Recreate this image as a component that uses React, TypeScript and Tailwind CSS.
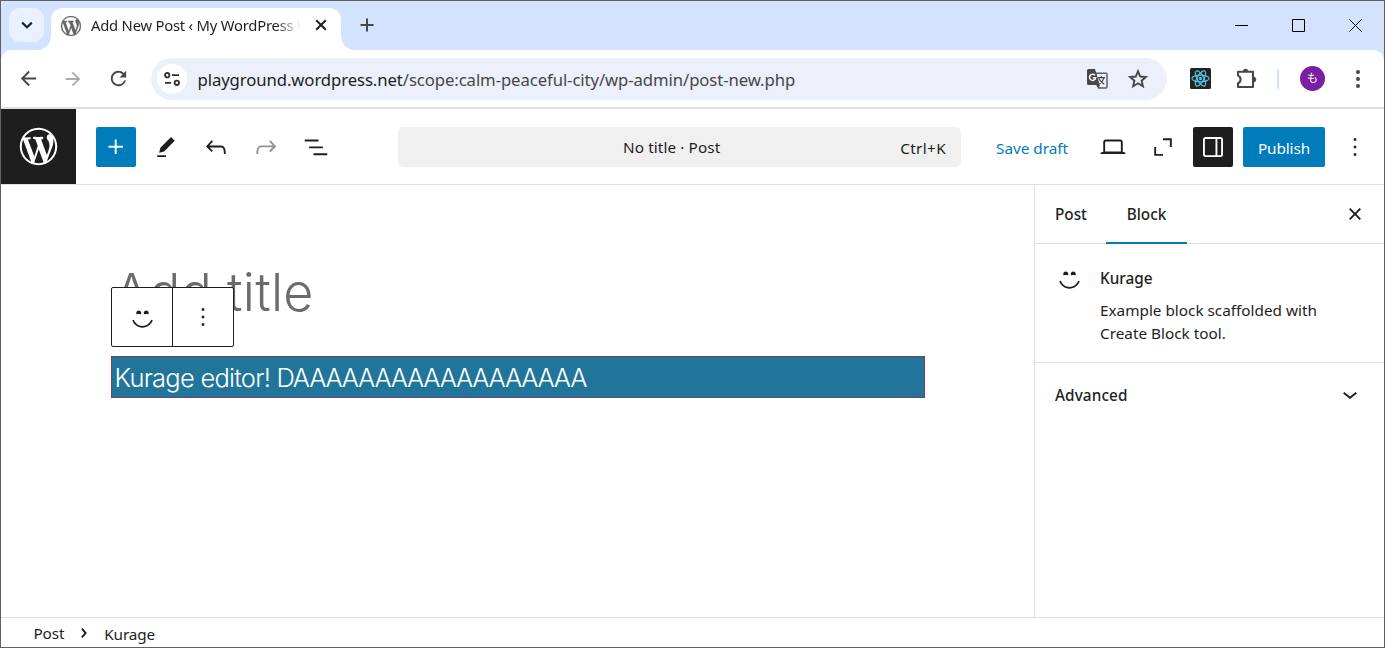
import React from 'react';
import clsx from 'clsx';
import { MdArrowBack, MdArrowForward, MdRefresh } from 'react-icons/md';

const WP_LOGO =
  'M20 10c0-5.51-4.49-10-10-10C4.48 0 0 4.49 0 10c0 5.52 4.48 10 10 10 5.51 0 10-4.48 10-10zM7.78 15.37L4.37 6.22c.55-.02 1.17-.08 1.17-.08.5-.06.44-1.13-.06-1.11 0 0-1.45.11-2.37.11-.18 0-.37 0-.58-.01C4.12 2.69 6.87 1.11 10 1.11c2.33 0 4.45.87 6.05 2.34-.68-.11-1.65.39-1.65 1.58 0 .74.45 1.36.9 2.1.35.61.55 1.36.55 2.46 0 1.49-1.4 5-1.4 5l-3.03-8.37c.54-.02.82-.17.82-.17.5-.05.44-1.25-.06-1.22 0 0-1.44.12-2.38.12-.87 0-2.33-.12-2.33-.12-.5-.03-.56 1.2-.06 1.22l.92.08 1.26 3.41zM17.41 10c.24-.64.74-1.87.43-4.25.7 1.29 1.05 2.71 1.05 4.25 0 3.29-1.73 6.24-4.4 7.78.97-2.59 1.94-5.2 2.92-7.78zM6.1 18.09C3.12 16.65 1.11 13.53 1.11 10c0-1.3.23-2.48.72-3.59C3.25 10.3 4.67 14.2 6.1 18.09zm4.03-6.63l2.58 6.98c-.86.29-1.76.45-2.71.45-.79 0-1.57-.11-2.29-.33.81-2.38 1.62-4.74 2.42-7.1z';

const icons = {
  plus: 'M11 12.5V17.5H12.5V12.5H17.5V11H12.5V6H11V11H6V12.5H11Z',
  edit: 'm19 7-3-3-8.5 8.5-1 4 4-1L19 7Zm-7 11.5H5V20h7v-1.5Z',
  undo: 'M18.3 11.7c-.6-.6-1.4-.9-2.3-.9H6.7l2.9-3.3-1.1-1-4.5 5L8.5 16l1-1-2.7-2.7H16c.5 0 .9.2 1.3.5 1 1 1 3.4 1 4.5v.3h1.5v-.2c0-1.5 0-4.3-1.5-5.7z',
  redo: 'M15.6 6.5l-1.1 1 2.9 3.3H8c-.9 0-1.7.3-2.3.9-1.4 1.5-1.4 4.2-1.4 5.6v.2h1.5v-.3c0-1.1 0-3.5 1-4.5.3-.3.7-.5 1.3-.5h9.2L14.5 15l1.1 1.1 4.6-4.6-4.6-5z',
  listView: 'M3 6h11v1.5H3V6Zm3.5 5.5h11V13h-11v-1.5ZM21 17H10v1.5h11V17Z',
  desktop:
    'M20.5 16h-.7V8c0-1.1-.9-2-2-2H6.2c-1.1 0-2 .9-2 2v8h-.7c-.8 0-1.5.7-1.5 1.5h20c0-.8-.7-1.5-1.5-1.5zM5.7 8c0-.3.2-.5.5-.5h11.6c.3 0 .5.2.5.5v7.6H5.7V8z',
  square: 'M12 5h7v7h-1.5V6.5H12zM5 12h1.5v5.5H12V19H5z',
  drawerRight:
    'M18 4H6c-1.1 0-2 .9-2 2v12c0 1.1.9 2 2 2h12c1.1 0 2-.9 2-2V6c0-1.1-.9-2-2-2zm-4 14.5H6c-.3 0-.5-.2-.5-.5V6c0-.3.2-.5.5-.5h8v13zm4.5-.5c0 .3-.2.5-.5.5h-2.5v-13H18c.3 0 .5.2.5.5v12z',
  moreVertical: 'M13 19h-2v-2h2v2zm0-6h-2v-2h2v2zm0-6h-2V5h2v2z',
  close:
    'M12 13.06l3.712 3.713 1.061-1.06L13.061 12l3.712-3.712-1.06-1.06L12 10.938 8.288 7.227l-1.061 1.06L10.939 12l-3.712 3.712 1.06 1.061L12 13.061z',
  chevronDown: 'M17.5 11.6L12 16l-5.5-4.4.9-1.2L12 14l4.5-3.6 1 1.2z',
  chevronRight:
    'M10.8622 8.04053L14.2805 12.0286L10.8622 16.0167L9.72327 15.0405L12.3049 12.0286L9.72327 9.01672L10.8622 8.04053Z',
};

const Icon = ({ name, className }: { name: keyof typeof icons; className?: string }) => (
  <svg viewBox="0 0 24 24" fill="currentColor" className={clsx('size-[30px] shrink-0', className)}>
    <path d={icons[name]} />
  </svg>
);

const Smiley = ({ className }: { className?: string }) => (
  <svg viewBox="0 0 20 20" fill="currentColor" className={clsx('size-[25px] shrink-0', className)}>
    <path d="M7 5.2c1.1 0 2 .89 2 2 0 .37-.11.71-.28 1C8.72 8.2 8 8 7 8s-1.72.2-1.72.2c-.17-.29-.28-.63-.28-1 0-1.11.9-2 2-2zm6 0c1.11 0 2 .89 2 2 0 .37-.11.71-.28 1 0 0-.72-.2-1.72-.2s-1.72.2-1.72.2c-.17-.29-.28-.63-.28-1 0-1.11.89-2 2-2zm-3 13.7c3.72 0 7.03-2.36 8.23-5.88l-1.32-.46C15.9 15.52 13.12 17.5 10 17.5s-5.9-1.98-6.91-4.94l-1.32.46c1.2 3.52 4.51 5.88 8.23 5.88z" />
  </svg>
);

const TranslateIcon = ({ className }: { className?: string }) => (
  <svg viewBox="0 0 21 20" className={clsx('h-[20px] w-[21px] shrink-0', className)} fill="none">
    <path d="M8.5 4.2H19a1 1 0 0 1 1 1V18a1 1 0 0 1-1 1h-7.5z" stroke="#5f6063" strokeWidth="1.5" />
    <path d="M1.5 0H8l4.8 16H1.5A1.5 1.5 0 0 1 0 14.5v-13A1.5 1.5 0 0 1 1.5 0z" fill="#474747" />
    <path d="m9 16 3 3.6.8-3.6z" fill="#474747" />
    <path d="M8 6.3a3.1 3.1 0 1 0 .7 2.4H5.8" stroke="#fff" strokeWidth="1.5" />
    <path
      d="M10.8 8.7h7.4M14.3 7v1.7M17 8.7c-.6 2.6-2.2 4.7-4.500 6.300M11.9 9.500c1.2 2.400 2.900 4.300 5.300 5.700"
      stroke="#474747"
      strokeWidth="1.2"
    />
  </svg>
);

const StarIcon = ({ className }: { className?: string }) => (
  <svg viewBox="0 0 24 24" className={clsx('size-[24px] shrink-0', className)} fill="none">
    <path
      d="m12 4.2 2.2 5.3 5.7.5-4.3 3.7 1.3 5.6-4.900-3-4.900 3 1.300-5.600L4.100 10l5.700-.5z"
      stroke="currentColor"
      strokeWidth="1.9"
    />
  </svg>
);

const ReactLogo = () => (
  <svg viewBox="0 0 21 21" className="size-[21px]" fill="none" stroke="#53c1de" strokeWidth="1.2">
    <rect width="21" height="21" rx="1.5" fill="#222" stroke="none" />
    <ellipse cx="10.5" cy="10.5" rx="8.6" ry="3.3" />
    <ellipse cx="10.5" cy="10.5" rx="8.6" ry="3.3" transform="rotate(60 10.5 10.5)" />
    <ellipse cx="10.5" cy="10.5" rx="8.6" ry="3.3" transform="rotate(120 10.5 10.5)" />
    <circle cx="10.5" cy="10.5" r="1.7" fill="#53c1de" stroke="none" />
  </svg>
);

const PuzzleIcon = ({ className }: { className?: string }) => (
  <svg viewBox="0 0 22 22" className={clsx('size-[22px] shrink-0', className)} fill="none">
    <path
      d="M2 4.8h15V20H2v-3.8a4.1 4.1 0 0 0 0-7.6Z"
      stroke="currentColor"
      strokeWidth="2.1"
      strokeLinejoin="round"
    />
    <path
      d="M7 4.5a2.5 2.5 0 0 1 5 0zM17.5 10a2.5 2.5 0 0 1 0 5z"
      fill="currentColor"
      stroke="currentColor"
      strokeWidth=".5"
    />
  </svg>
);

const TabStrip = () => (
  <div className="flex h-[49px] items-end bg-[#d3e2fd]">
    <div className="mb-[8px] ml-[8px] flex h-[34px] w-[35px] items-center justify-center rounded-[11px] bg-[#e9f0fe]">
      <svg viewBox="0 0 12 12" className="size-3" fill="none" stroke="#1f1f1f" strokeWidth="2.2">
        <path d="M1.2 3.6 6 8.2l4.8-4.6" />
      </svg>
    </div>
    {/* Left flare of the active tab */}
    <svg viewBox="0 0 15 15" className="ml-[-8px] size-[15px]" fill="white">
      <path d="M15 0v15H0C9 15 15 9 15 0z" />
    </svg>
    <div className="flex h-[42px] w-[290px] items-center rounded-t-[12px] bg-white pb-[7px] pl-[10px]">
      <svg viewBox="0 0 20 20" className="size-[20px] shrink-0" fill="#646464" stroke="#646464" strokeWidth=".3">
        <path d={WP_LOGO} />
      </svg>
      <div className="mb-[2px] ml-[10px] w-[210px] overflow-hidden bg-linear-to-r from-[#1f1f1f] from-88% to-transparent bg-clip-text text-[14.8px] leading-[24px] tracking-[-0.22px] whitespace-nowrap text-transparent">
        Add New Post ‹ My WordPress W
      </div>
      <svg viewBox="0 0 12 12" className="mb-[1px] ml-[14px] size-3 shrink-0" fill="none" stroke="#1f1f1f" strokeWidth="2">
        <path d="m1.2 1.2 9.6 9.6m0-9.6-9.6 9.6" />
      </svg>
    </div>
    <svg viewBox="0 0 15 15" className="size-[15px]" fill="white">
      <path d="M0 0v15h15C6 15 0 9 0 0z" />
    </svg>
    <svg viewBox="0 0 14 14" className="mb-[18px] ml-[4px] size-[14px]" fill="none" stroke="#474747" strokeWidth="2">
      <path d="M7 .5v13M.5 7h13" />
    </svg>
    <div className="mr-[22px] mb-[18px] ml-auto flex items-center gap-[44px] text-black">
      <svg viewBox="0 0 13 13" className="size-[13px]" stroke="currentColor">
        <path d="M0 6.5h13" />
      </svg>
      <svg viewBox="0 0 13 13" className="size-[13px]" fill="none" stroke="currentColor">
        <path d="M.5.5h12v12H.5z" />
      </svg>
      <svg viewBox="0 0 13 13" className="size-[13px]" fill="none" stroke="currentColor">
        <path d="m.3.3 12.4 12.4m0-12.4L.3 12.7" />
      </svg>
    </div>
  </div>
);

const AddressBar = () => (
  <div className="bg-[#d3e2fd]">
    <div className="flex h-[57px] items-center rounded-t-[10px] bg-white text-[#474747]">
      <MdArrowBack className="ml-[16px] size-[23px]" />
      <MdArrowForward className="ml-[22px] size-[22px] text-[#ababab]" />
      <MdRefresh className="ml-[23px] size-[23px]" />
      <div className="ml-[21px] flex h-[42px] w-[1016px] items-center rounded-full bg-[#ebf0fa] pl-[6px]">
        <div className="flex size-[30px] items-center justify-center rounded-full bg-white">
          <svg viewBox="0 0 16 14" className="h-[14px] w-[16px]" fill="none" stroke="#303030" strokeWidth="1.8">
            <circle cx="3.2" cy="3.2" r="2.2" />
            <path d="M8 3.2h7M1 10.8h6" />
            <circle cx="12.8" cy="10.8" r="2.2" />
          </svg>
        </div>
        <div className="mt-[2px] ml-[10.5px] text-[16.7px] leading-[24px] tracking-[-0.08px] whitespace-nowrap text-[#474747]">
          <span className="text-[#1f1f1f]">playground.wordpress.net</span>/scope:calm-peaceful-city/wp-admin/post-new.php
        </div>
        <TranslateIcon className="ml-auto" />
        <StarIcon className="mr-[17px] ml-[18px]" />
      </div>
      <div className="ml-[23px]">
        <ReactLogo />
      </div>
      <PuzzleIcon className="mb-[2px] ml-[25px]" />
      <div className="ml-[19px] h-[20px] w-[2px] rounded-full bg-[#d3e2fd]" />
      <div className="ml-[21px] flex size-[25px] items-center justify-center rounded-full bg-[#7b1fa2] text-[11px] text-white">も</div>
      <svg viewBox="0 0 4 18" className="ml-[31px] h-[18px] w-[4px]" fill="currentColor">
        <circle cx="2" cy="2" r="2" />
        <circle cx="2" cy="9" r="2" />
        <circle cx="2" cy="16" r="2" />
      </svg>
    </div>
  </div>
);

const EditorHeader = () => (
  <div className="flex h-[76px] items-center border-b border-[#e0e0e0]">
    <div className="flex size-[75px] items-center justify-center bg-[#1e1e1e]">
      <svg viewBox="-2 -2 24 24" className="size-[45px]" fill="white">
        <path d={WP_LOGO} />
      </svg>
    </div>
    <div className="ml-[20px] flex size-[40px] items-center justify-center rounded-[2px] bg-[#007cba] text-white">
      <Icon name="plus" />
    </div>
    <div className="ml-[15px] flex gap-[20px]">
      <Icon name="edit" />
      <Icon name="undo" />
      <Icon name="redo" className="text-[#949494]" />
      <Icon name="listView" />
    </div>
    <div className="ml-[67px] flex h-[40px] w-[563px] items-center rounded-[5px] bg-[#f0f0f0] pt-[2px] pr-[15px]">
      <span className="ml-[225px] text-[15.3px] tracking-[0.1px]">No title · Post</span>
      <span className="mt-px ml-auto text-[15.3px] tracking-[0.35px]">Ctrl+K</span>
    </div>
    <span className="mt-[3px] ml-[35px] w-[73px] text-[15.3px] whitespace-nowrap text-[#007cba]">Save draft</span>
    <Icon name="desktop" className="ml-[29px]" />
    <Icon name="square" className="ml-[20px]" />
    <div className="ml-[15px] flex size-[40px] items-center justify-center rounded-[2px] bg-[#1e1e1e] text-white">
      <Icon name="drawerRight" />
    </div>
    <div className="ml-[10px] flex h-[40px] w-[82px] items-center justify-center rounded-[2px] bg-[#007cba] pt-[3px] text-[15.3px] tracking-[-0.1px] text-white">
      Publish
    </div>
    <Icon name="moreVertical" className="ml-[15px]" />
  </div>
);

const Canvas = () => (
  <div className="flex-1 pt-[75px] pl-[110px] font-[Inter,sans-serif]">
    <div className="relative">
      <h1 className="ml-[3px] h-[67px] text-[52px] leading-[66px] font-light tracking-[0.25px] text-[#6b6b6b]">Add title</h1>
      {/* Block toolbar floats over the title */}
      <div className="absolute top-[26.5px] left-0 flex h-[60px] w-[123px] rounded-[2px] border border-[#1e1e1e] bg-white">
        <div className="flex w-[61px] items-center justify-center border-r border-[#1e1e1e] pb-px">
          <Smiley />
        </div>
        <div className="flex flex-1 items-center justify-center">
          <Icon name="moreVertical" />
        </div>
      </div>
    </div>
    <div className="mt-[29px] h-[42px] w-[814px] border border-dotted border-[#f00] bg-[#21759b] pl-[2.5px] text-[25.5px] leading-[42px] font-light tracking-[-0.75px] whitespace-nowrap text-white shadow-[inset_0_1px_#007cba,inset_0_-1px_#007cba]">
      Kurage editor! <span className="tracking-[-1.27px]">DAAAAAAAAAAAAAAAAAA</span>
    </div>
  </div>
);

const Sidebar = () => (
  <div className="w-[350px] border-l border-[#e0e0e0]">
    <div className="flex h-[59px] border-b border-[#e0e0e0] text-[15.3px] font-medium">
      <div className="flex w-[71px] items-center pt-px pl-[20px]">Post</div>
      <div className="-mb-px flex w-[81px] items-center justify-center border-b-2 border-[#007cba] pt-px">Block</div>
      <Icon name="close" className="mt-[14px] mr-[14px] ml-auto" />
    </div>
    <div className="flex h-[119px] border-b border-[#e0e0e0] pt-[22px] pl-[22px]">
      <Smiley className="-mt-px" />
      <div className="ml-[18px]">
        <div className="text-[15.3px] leading-[24px] font-medium">Kurage</div>
        <div className="mt-[9px] text-[15.3px] leading-[23px]">
          Example block scaffolded with
          <br />
          Create Block tool.
        </div>
      </div>
    </div>
    <div className="flex h-[65px] items-center justify-between pr-[19px] pl-[20px] text-[15.3px] font-medium tracking-[0.1px]">
      Advanced
      <Icon name="chevronDown" className="mb-[3px]" />
    </div>
  </div>
);

export default function App() {
  return (
    <div className="flex h-[648px] w-[1385px] flex-col overflow-hidden border border-[#5f6069] bg-white font-['Noto_Sans','Noto_Sans_CJK_JP',sans-serif] text-[#1e1e1e]">
      <TabStrip />
      <AddressBar />
      <div className="h-[2px] shrink-0 bg-[#e0e0e0]" />
      <EditorHeader />
      <div className="flex flex-1">
        <Canvas />
        <Sidebar />
      </div>
      <div className="flex h-[30px] items-center border-t border-[#e0e0e0] pl-[32.5px] text-[15.3px] tracking-[-0.15px]">
        <span className="mt-[2px]">Post</span>
        <Icon name="chevronRight" className="mx-[5px]" />
        <span className="mt-[4px]">Kurage</span>
      </div>
    </div>
  );
}
